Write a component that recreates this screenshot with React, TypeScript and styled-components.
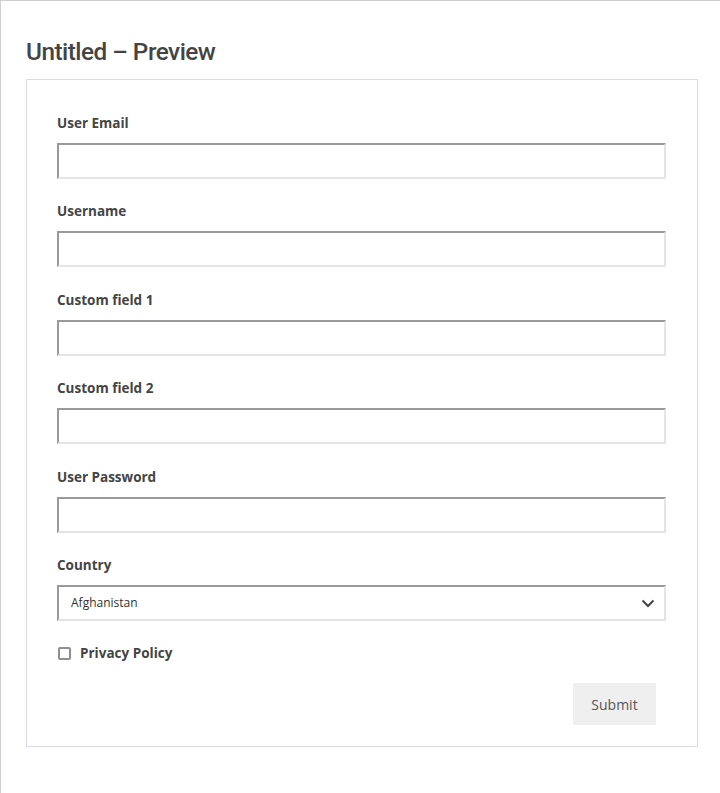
import React from "react";
import styled, { createGlobalStyle } from "styled-components";

const Global = createGlobalStyle`
  html, body { margin: 0; padding: 0; background: #fff; }
  body { font-family: "Open Sans", "Liberation Sans", sans-serif; }
  * { box-sizing: border-box; }
`;

const Page = styled.div`
  min-height: 793px;
  border-top: 1px solid #cfcfcf;
  border-left: 1px solid #cfcfcf;
  padding: 35px 22px 40px 25px;
`;

const Title = styled.h1`
  margin: 0 0 11px 0;
  font-family: "Roboto", "Liberation Sans", sans-serif;
  font-weight: 500;
  font-size: 24.3px;
  line-height: 32px;
  letter-spacing: -0.5px;
  color: #444;
`;

const Card = styled.form`
  width: 672px;
  border: 1px solid #dedbe8;
  padding: 33px 30px 21px 30px;
  display: flex;
  flex-direction: column;
`;

const Field = styled.div`
  display: flex;
  flex-direction: column;
  gap: 10px;
  margin-bottom: 22.4px;
`;

const Label = styled.label`
  font-family: "Open Sans", "Liberation Sans", sans-serif;
  font-weight: 700;
  font-size: 13.5px;
  line-height: 20px;
  color: #444;
`;

const insetBorder = `
  border-width: 2px;
  border-style: solid;
  border-top-color: #9a9a9a;
  border-left-color: #9a9a9a;
  border-right-color: #e4e4e4;
  border-bottom-color: #e4e4e4;
`;

const Input = styled.input`
  width: 609px;
  height: 36px;
  ${insetBorder}
  background: #fff;
  padding: 0 12px;
  font-size: 13px;
  outline: none;
`;

const SelectBox = styled.div`
  position: relative;
  width: 609px;
  height: 36px;
  ${insetBorder}
  display: flex;
  align-items: center;
  justify-content: space-between;
  padding: 0 8px 0 12px;
  font-family: "Open Sans", "Liberation Sans", sans-serif;
  font-size: 12px;
  color: #333;
`;

const CheckRow = styled.div`
  display: flex;
  align-items: center;
  gap: 9px;
`;

const Check = styled.span`
  display: inline-block;
  width: 13px;
  height: 13px;
  margin-left: 1px;
  border: 2px solid #8f8d99;
  border-radius: 2px;
  background: #fff;
`;

const Actions = styled.div`
  display: flex;
  justify-content: flex-end;
  padding-right: 11px;
  margin-top: 20px;
`;

const Button = styled.button`
  width: 83px;
  height: 42px;
  border: none;
  background: #efefef;
  color: #555;
  font-family: "Open Sans", "Liberation Sans", sans-serif;
  font-size: 14px;
  cursor: pointer;
`;

const fields = ["User Email", "Username", "Custom field 1", "Custom field 2", "User Password"];

export default function App() {
  return (
    <>
      <Global />
      <Page>
        <Title>Untitled – Preview</Title>
        <Card onSubmit={(e) => e.preventDefault()}>
          {fields.map((f) => (
            <Field key={f}>
              <Label>{f}</Label>
              <Input type={f === "User Password" ? "password" : "text"} />
            </Field>
          ))}
          <Field>
            <Label>Country</Label>
            <SelectBox>
              <span>Afghanistan</span>
              <svg width="16" height="16" viewBox="0 0 16 16" fill="none">
                <path d="M2.5 5.5 L8 11 L13.5 5.5" stroke="#444" strokeWidth="2" />
              </svg>
            </SelectBox>
          </Field>
          <CheckRow>
            <Check />
            <Label>Privacy Policy</Label>
          </CheckRow>
          <Actions>
            <Button type="submit">Submit</Button>
          </Actions>
        </Card>
      </Page>
    </>
  );
}
